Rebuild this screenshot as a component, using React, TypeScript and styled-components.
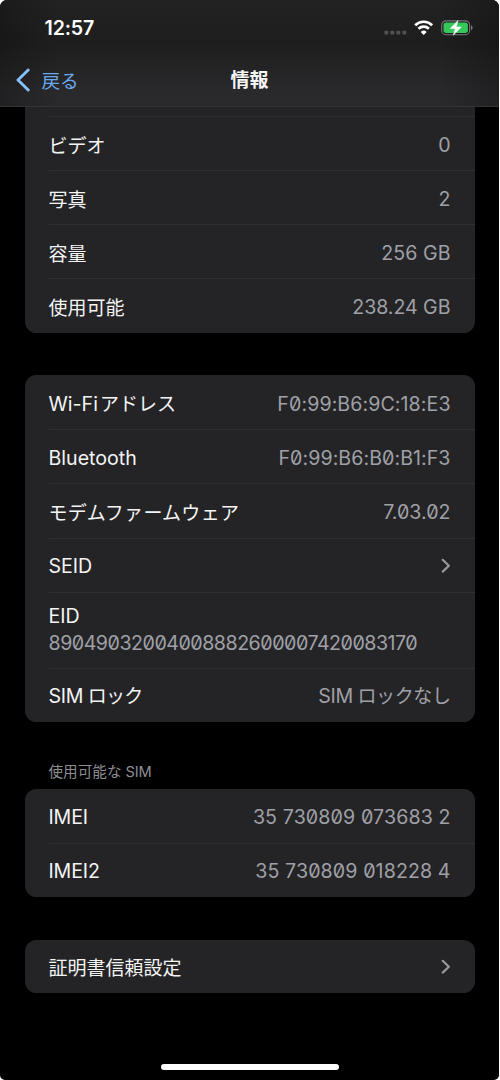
import React from "react";
import styled, { createGlobalStyle } from "styled-components";

const GlobalStyle = createGlobalStyle`
  * { box-sizing: border-box; }
  html, body { margin: 0; background: #fff; }
`;

const Screen = styled.div`
  width: 499px;
  height: 1080px;
  display: flex;
  flex-direction: column;
  overflow: hidden;
  border-radius: 7px 7px 5px 5px;
  background: #000;
  color: #f4f4f5;
  font-family: Inter, "Noto Sans CJK JP", sans-serif;
  font-size: 19.6px;
`;

const Header = styled.header`
  flex: none;
  height: 107px;
  border-bottom: 1px solid #333335;
  background:
    linear-gradient(90deg, rgba(0, 0, 0, 0.22), rgba(0, 0, 0, 0) 12%, rgba(0, 0, 0, 0) 88%, rgba(0, 0, 0, 0.22)),
    linear-gradient(180deg, #222223 0%, #1e1e1f 40%, #29292b 85%, #2a2a2c 100%);
`;

const StatusBar = styled.div`
  height: 55px;
  padding: 0 26px 0 44.5px;
  display: flex;
  align-items: center;
  justify-content: space-between;
`;

const Clock = styled.span`
  font-size: 19.6px;
  font-weight: 600;
  letter-spacing: -0.15px;
  line-height: 24px;
  color: #fff;
`;

const StatusIcons = styled.svg`
  display: block;
`;

const NavBar = styled.nav`
  height: 49.4px;
  padding: 0 14px;
  display: grid;
  grid-template-columns: 1fr auto 1fr;
  align-items: center;
`;

const Back = styled.span`
  display: flex;
  align-items: center;
  gap: 10.5px;
  color: #69a8ec;
  font-size: 18.6px;
  line-height: 26px;
`;

const Title = styled.h1`
  margin: 0;
  font-size: 19px;
  font-weight: 700;
  line-height: 26px;
  color: #f6f6f6;
`;

const Content = styled.main`
  flex: 1;
  min-height: 0;
  padding: 0 24.5px;
`;

const Card = styled.section<{ $top?: number; $clipped?: boolean }>`
  margin-top: ${(p) => p.$top ?? 0}px;
  overflow: hidden;
  border-radius: ${(p) => (p.$clipped ? "0 0 11.5px 11.5px" : "11.5px")};
  background: #242426;
`;

const Row = styled.div<{ $h?: number; $pad?: number }>`
  height: ${(p) => p.$h ?? 54.1}px;
  margin-left: 24px;
  padding-top: ${(p) => p.$pad ?? 1}px;
  padding-right: 24px;
  display: flex;
  align-items: center;
  justify-content: space-between;
  line-height: 26px;
  white-space: nowrap;
  & + & {
    border-top: 1px solid #303032;
  }
`;

const Stack = styled.div`
  display: flex;
  flex-direction: column;
  line-height: 27px;
`;

const Label = styled.span`
  display: flex;
  align-items: baseline;
`;

const Value = styled(Label)`
  color: #a0a0a7;
`;

const Latin = styled.span<{ $ls?: number; $zero?: boolean }>`
  letter-spacing: ${(p) => p.$ls ?? 0}px;
  margin-right: ${(p) => -(p.$ls ?? 0)}px;
  font-feature-settings: ${(p) => (p.$zero ? '"zero" 1' : "normal")};
  white-space: pre;
`;

const Kana = styled.span<{ $gap?: number; $ls?: number; $size?: number }>`
  font-family: "Noto Sans CJK JP", sans-serif;
  font-size: ${(p) => p.$size ?? 19}px;
  letter-spacing: ${(p) => p.$ls ?? 0}px;
  margin-left: ${(p) => p.$gap ?? 0}px;
`;

const SectionTitle = styled.h2`
  margin: 37.8px 0 0 24px;
  height: 29.3px;
  display: flex;
  align-items: baseline;
  font-size: 14.6px;
  font-weight: 400;
  line-height: 24px;
  color: #8e8e93;
`;

const HomeIndicator = styled.div`
  flex: none;
  width: 178px;
  height: 6px;
  margin: 0 auto 10px;
  border-radius: 3px;
  background: #fff;
`;

const Chevron = () => (
  <svg width="10" height="16" viewBox="0 0 10 16" fill="none">
    <path d="M1.700 1.800 7.900 7.700l-6.200 5.900" stroke="#97979d" strokeWidth="2.200" strokeLinecap="round" strokeLinejoin="round" />
  </svg>
);

const BackChevron = () => (
  <svg width="17" height="24" viewBox="0 0 17 24" fill="none">
    <path d="M14.200 2 4 12l10.200 10" stroke="#86c0fb" strokeWidth="2.900" strokeLinecap="round" strokeLinejoin="round" />
  </svg>
);

const Indicators = () => (
  <StatusIcons width="90" height="20" viewBox="0 0 90 20">
    <g fill="#515153">
      <rect x="1.300" y="12.800" width="4" height="3.700" rx="1" />
      <rect x="7.300" y="12.800" width="4" height="3.700" rx="1" />
      <rect x="13.300" y="12.800" width="4" height="3.700" rx="1" />
      <rect x="19.300" y="12.800" width="4" height="3.700" rx="1" />
    </g>
    <g fill="none" stroke="#fff" strokeWidth="2.700">
      <path d="M32.200 7.200a12.200 12.200 0 0 1 17 0" />
      <path d="M35.500 10.800a7.500 7.500 0 0 1 10.400 0" />
    </g>
    <path d="M40.700 16.900 37.700 13.900a4.400 4.400 0 0 1 6 0z" fill="#fff" />
    <rect x="58.700" y="2.900" width="28" height="13.800" rx="4.300" fill="none" stroke="#77777a" strokeWidth="1.100" />
    <rect x="60.500" y="4.600" width="24.400" height="10.400" rx="2.700" fill="#34c759" />
    <path d="M88 7.300v5c1-.4 1.600-1.300 1.600-2.500S89 7.700 88 7.300z" fill="#77777a" />
    <path d="M75 2.500 67.300 10.600h4.900L70.300 17.200 78.300 8.900h-5z" fill="#fff" stroke="#fff" strokeWidth="0.500" strokeLinejoin="round" />
  </StatusIcons>
);

export default function App() {
  return (
    <>
      <GlobalStyle />
      <Screen>
        <Header>
          <StatusBar>
            <Clock>12:57</Clock>
            <Indicators />
          </StatusBar>
          <NavBar>
            <Back>
              <BackChevron />
              <Kana $size={18.6}>戻る</Kana>
            </Back>
            <Title>
              <Kana>情報</Kana>
            </Title>
          </NavBar>
        </Header>
        <Content>
          <Card $clipped>
            <Row $h={8.9} />
            <Row $pad={2.3}>
              <Kana>ビデオ</Kana>
              <Value><Latin>0</Latin></Value>
            </Row>
            <Row $pad={2.6}>
              <Kana>写真</Kana>
              <Value><Latin>2</Latin></Value>
            </Row>
            <Row $pad={1.8}>
              <Kana>容量</Kana>
              <Value><Latin $ls={0.05}>256 GB</Latin></Value>
            </Row>
            <Row $h={54.5} $pad={1.8}>
              <Kana>使用可能</Kana>
              <Value><Latin $ls={-0.05}>238.24 GB</Latin></Value>
            </Row>
          </Card>

          <Card $top={42.600}>
            <Row $pad={3}>
              <Label><Latin>Wi-Fi</Latin><Kana $gap={2}>アドレス</Kana></Label>
              <Value><Latin $zero $ls={0.08}>F0:99:B6:9C:18:E3</Latin></Value>
            </Row>
            <Row $pad={2}>
              <Label><Latin>Bluetooth</Latin></Label>
              <Value><Latin $zero $ls={0.06}>F0:99:B6:B0:B1:F3</Latin></Value>
            </Row>
            <Row $pad={1.6}>
              <Kana $ls={0.28}>モデムファームウェア</Kana>
              <Value><Latin $zero>7.03.02</Latin></Value>
            </Row>
            <Row $pad={2}>
              <Label><Latin>SEID</Latin></Label>
              <Chevron />
            </Row>
            <Row $h={76} $pad={0}>
              <Stack>
                <Label><Latin>EID</Latin></Label>
                <Value><Latin $zero $ls={-0.48}>89049032004008882600007420083170</Latin></Value>
              </Stack>
            </Row>
            <Row $pad={1.6}>
              <Label><Latin $ls={-0.3}>SIM</Latin><Kana $gap={4.3} $ls={-0.8}>ロック</Kana></Label>
              <Value><Latin $ls={-0.3}>SIM</Latin><Kana $gap={4.3} $ls={-0.4}>ロックなし</Kana></Value>
            </Row>
          </Card>

          <SectionTitle>使用可能な<Latin $ls={-0.1}> SIM</Latin></SectionTitle>
          <Card>
            <Row $pad={2.5}>
              <Label><Latin $ls={-0.15}>IMEI</Latin></Label>
              <Value><Latin $zero $ls={0.12}>35 730809 073683 2</Latin></Value>
            </Row>
            <Row $pad={2}>
              <Label><Latin $ls={-0.15}>IMEI2</Latin></Label>
              <Value><Latin $zero $ls={0.1}>35 730809 018228 4</Latin></Value>
            </Row>
          </Card>

          <Card $top={42.600}>
            <Row $h={53.8} $pad={1.8}>
              <Kana>証明書信頼設定</Kana>
              <Chevron />
            </Row>
          </Card>
        </Content>
        <HomeIndicator />
      </Screen>
    </>
  );
}
